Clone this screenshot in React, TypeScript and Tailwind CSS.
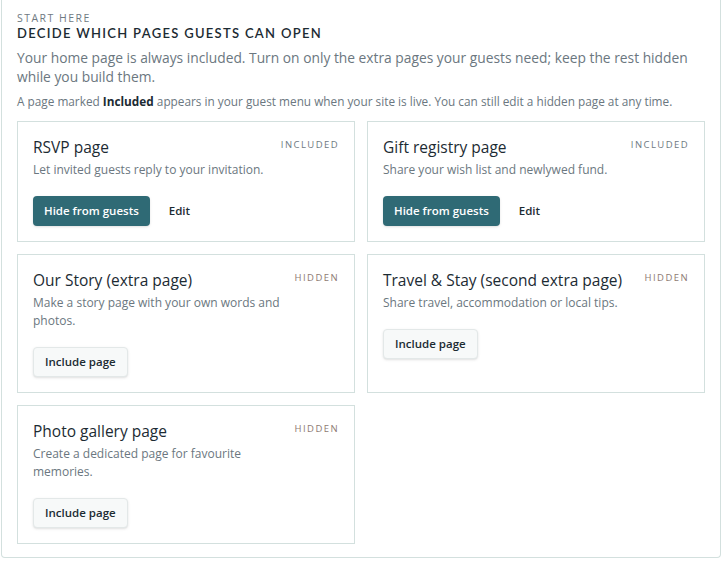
const pages = [
  { title: 'RSVP page', text: 'Let invited guests reply to your invitation.', included: true },
  { title: 'Gift registry page', text: 'Share your wish list and newlywed fund.', included: true },
  { title: 'Our Story (extra page)', text: 'Make a story page with your own words and photos.', included: false },
  { title: 'Travel & Stay (second extra page)', text: 'Share travel, accommodation or local tips.', included: false },
  { title: 'Photo gallery page', text: 'Create a dedicated page for favourite memories.', included: false },
];

function PageCard({ page }: { page: (typeof pages)[number] }) {
  return (
    <div className="border border-[#d3e0de] bg-white px-[15px] pt-[14px] pb-[15px]">
      <div className="flex items-start justify-between gap-3">
        <h3 className="text-[15.5px] leading-[22px] text-[#1c2b33]">{page.title}</h3>
        <span
          className={
            page.included
              ? 'mt-[2px] text-[9.5px] tracking-[0.15em] text-[#6f7a82]'
              : 'mt-[2px] text-[9.5px] tracking-[0.15em] text-[#8e7a72]'
          }
        >
          {page.included ? 'INCLUDED' : 'HIDDEN'}
        </span>
      </div>
      <p className="mt-[3px] max-w-[250px] text-[12px] leading-[18px] text-[#6b7780]">{page.text}</p>
      {page.included ? (
        <div className="mt-[17px] flex items-center gap-[19px]">
          <button className="h-[30px] rounded-[4px] bg-[#2f6a75] px-[11px] text-[11.5px] font-semibold text-white shadow-sm">
            Hide from guests
          </button>
          <button className="text-[11.5px] font-semibold text-[#1c2b33]">Edit</button>
        </div>
      ) : (
        <button className="mt-[17px] h-[30px] rounded-[4px] border border-[#e3e8e8] bg-[#f7f9f9] px-[11px] text-[11.5px] font-semibold text-[#1c2b33] shadow-sm">
          Include page
        </button>
      )}
    </div>
  );
}

export default function App() {
  return (
    <div className="h-[562px] bg-white font-['Open_Sans',sans-serif]">
      <div className="mx-[1px] rounded-b-[4px] border-x border-b border-[#d3e0de] px-[15px] pt-[11px] pb-[13px]">
        <div className="text-[10.5px] leading-[14px] tracking-[0.14em] text-[#6f7a82]">START HERE</div>
        <h2 className="font-['Lato',sans-serif] text-[13px] leading-[16px] font-semibold tracking-[0.1em] text-[#1c2b33]">
          DECIDE WHICH PAGES GUESTS CAN OPEN
        </h2>
        <p className="mt-[7px] text-[13.8px] leading-[19px] text-[#6b7780]">
          Your home page is always included. Turn on only the extra pages your guests need; keep the rest hidden
          while you build them.
        </p>
        <p className="mt-[8px] text-[11.8px] leading-[15px] text-[#6b7780]">
          A page marked <b className="text-[#1c2b33]">Included</b> appears in your guest menu when your site is
          live. You can still edit a hidden page at any time.
        </p>
        <div className="mt-[12px] grid grid-cols-2 gap-[12px]">
          {pages.map((p) => (
            <PageCard key={p.title} page={p} />
          ))}
        </div>
      </div>
    </div>
  );
}
